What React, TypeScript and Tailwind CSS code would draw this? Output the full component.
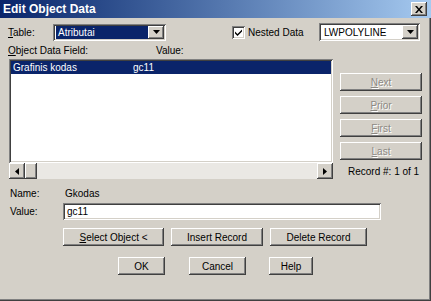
import React from "react";

const raised =
  "bg-[#d4d0c8] shadow-[inset_-1px_-1px_#404040,inset_1px_1px_#ffffff,inset_-2px_-2px_#808080,inset_2px_2px_#d4d0c8]";
const sunken =
  "shadow-[inset_1px_1px_#808080,inset_-1px_-1px_#ffffff,inset_2px_2px_#404040,inset_-2px_-2px_#d4d0c8]";

const DownArrow = () => (
  <svg width="7" height="4" viewBox="0 0 7 4">
    <path d="M0 0h7L3.5 4z" fill="#000" />
  </svg>
);

const Combo = ({ text, selected, className }: { text: string; selected?: boolean; className: string }) => (
  <div className={`${sunken} bg-white flex items-center p-[2px] ${className}`}>
    <div className="flex-1 h-full flex items-center pl-[1px]">
      <span className={selected ? "bg-[#0a246a] text-white w-full h-[13px] leading-[13px] pl-[2px]" : "pl-[2px]"}>
        {text}
      </span>
    </div>
    <div className={`${raised} w-[16px] h-full flex items-center justify-center`}>
      <DownArrow />
    </div>
  </div>
);

const Btn = ({
  children,
  className,
  disabled,
}: {
  children: React.ReactNode;
  className: string;
  disabled?: boolean;
}) => (
  <div
    className={`${raised} h-[18px] flex items-center justify-center ${
      disabled ? "text-[#8c8984] [text-shadow:1px_1px_#ffffff]" : "text-black"
    } ${className}`}
  >
    {children}
  </div>
);

export default function App() {
  return (
    <div className="w-[431px] h-[301px] bg-[#d4d0c8] font-['Liberation_Sans',Arial,sans-serif] text-[10px] text-black shadow-[inset_-1px_-1px_#404040,inset_-2px_-2px_#808080] flex flex-col overflow-hidden">
      {/* title bar */}
      <div className="h-[18px] bg-linear-to-r from-[#0a246a] to-[#a6caf0] flex items-center pl-[3px] pr-[4px] shrink-0">
        <span className="text-white font-bold text-[12px]">Edit Object Data</span>
        <div className={`${raised} ml-auto w-[16px] h-[14px] flex items-center justify-center`}>
          <svg width="8" height="7" viewBox="0 0 8 7">
            <path d="M0 0h2l2 2.5L6 0h2L5 3.5 8 7H6L4 4.5 2 7H0l3-3.5z" fill="#000" />
          </svg>
        </div>
      </div>

      {/* table row */}
      <div className="flex items-center h-[18px] mt-[5px] pl-[8px] pr-[11px]">
        <span className="w-[45px]">
          <u>T</u>able:
        </span>
        <Combo text="Atributai" selected className="w-[113px] h-[17px]" />
        <div className={`${sunken} bg-white w-[13px] h-[13px] ml-[66px] flex items-center justify-center`}>
          <svg width="7" height="7" viewBox="0 0 7 7">
            <path d="M0 2.5l2.5 2.5L7 0.5v2L2.5 7 0 4.5z" fill="#000" />
          </svg>
        </div>
        <span className="ml-[3px]">Nested Data</span>
        <Combo text="LWPOLYLINE" className="ml-auto w-[101px] h-[18px]" />
      </div>

      {/* labels */}
      <div className="flex items-center h-[18px] pl-[8px]">
        <span className="w-[148px]">
          <u>O</u>bject Data Field:
        </span>
        <span>Value:</span>
      </div>

      {/* list + side buttons */}
      <div className="flex pl-[9px] h-[120px]">
        <div className="w-[324px] flex flex-col">
          <div className={`${sunken} bg-white h-[104px] p-[2px]`}>
            <div className="bg-[#0a246a] text-white h-[13px] flex items-center pl-[2px]">
              <span className="w-[120px]">Grafinis kodas</span>
              <span>gc11</span>
            </div>
          </div>
          <div className="h-[16px] flex bg-[#eae8e4]">
            <div className={`${raised} w-[16px] h-[16px] flex items-center justify-center`}>
              <svg width="4" height="7" viewBox="0 0 4 7">
                <path d="M4 0v7L0 3.5z" fill="#000" />
              </svg>
            </div>
            <div className={`${raised} w-[12px] h-[16px]`} />
            <div className="flex-1" />
            <div className={`${raised} w-[16px] h-[16px] flex items-center justify-center`}>
              <svg width="4" height="7" viewBox="0 0 4 7">
                <path d="M0 0v7l4-3.5z" fill="#000" />
              </svg>
            </div>
          </div>
        </div>
        <div className="ml-[7px] w-[82px] flex flex-col pt-[14px] gap-[5px]">
          <Btn disabled className="w-[82px]">
            <span>
              <u>N</u>ext
            </span>
          </Btn>
          <Btn disabled className="w-[82px]">
            <span>
              <u>P</u>rior
            </span>
          </Btn>
          <Btn disabled className="w-[82px]">
            <span>
              <u>F</u>irst
            </span>
          </Btn>
          <Btn disabled className="w-[82px]">
            <span>
              <u>L</u>ast
            </span>
          </Btn>
          <div className="mt-[1px] h-[12px] leading-[12px] pl-[8px] whitespace-nowrap">Record #: 1 of 1</div>
        </div>
      </div>

      {/* name */}
      <div className="flex items-center h-[14px] mt-[7px] pl-[10px]">
        <span className="w-[55px]">Name:</span>
        <span>Gkodas</span>
      </div>

      {/* value */}
      <div className="flex items-center mt-[3px] pl-[10px]">
        <span className="w-[53px]">Value:</span>
        <div className={`${sunken} bg-white w-[318px] h-[17px] flex items-center pl-[4px]`}>gc11</div>
      </div>

      {/* record buttons */}
      <div className="flex mt-[8px] pl-[63px] gap-[7px]">
        <Btn className="w-[101px]">
          <span>
            <u>S</u>elect Object &lt;
          </span>
        </Btn>
        <Btn className="w-[92px]">Insert Record</Btn>
        <Btn className="w-[97px]">Delete Record</Btn>
      </div>

      {/* dialog buttons */}
      <div className="flex mt-[11px] pl-[118px]">
        <Btn className="w-[47px]">OK</Btn>
        <Btn className="w-[57px] ml-[24px]">Cancel</Btn>
        <Btn className="w-[44px] ml-[23px]">Help</Btn>
      </div>
    </div>
  );
}
